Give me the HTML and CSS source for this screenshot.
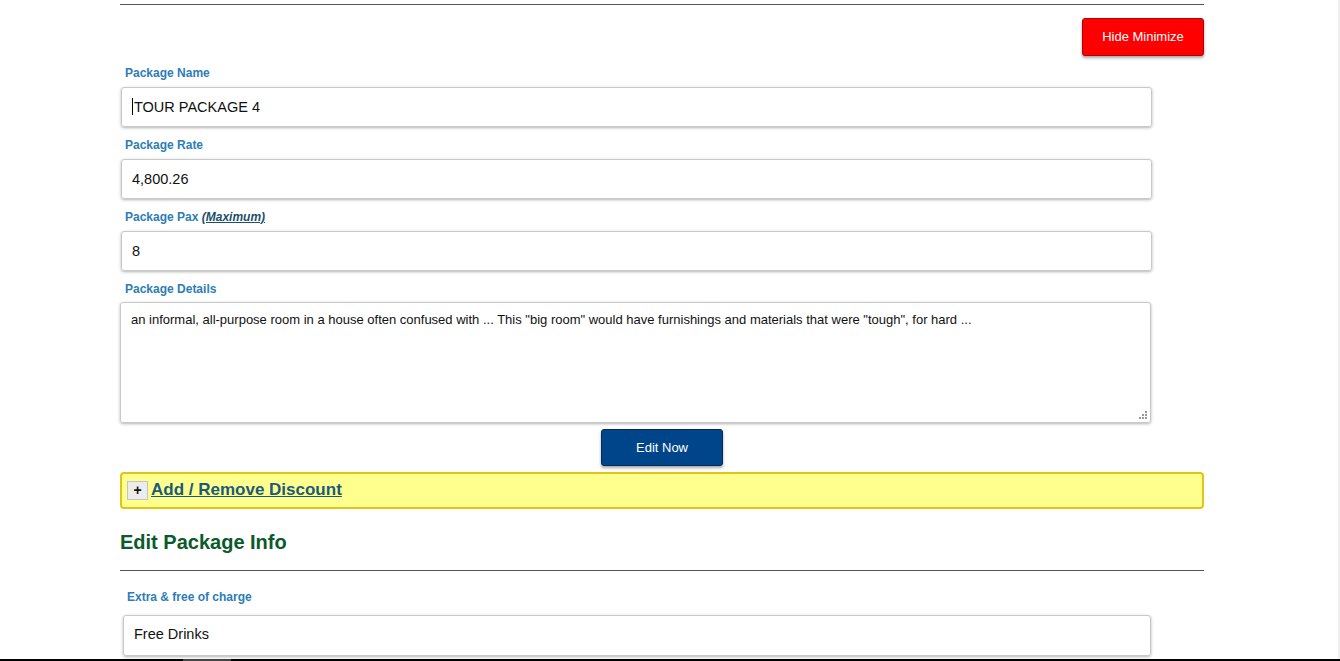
FILE: index.html
```html
<!DOCTYPE html>
<html>
<head>
<meta charset="utf-8">
<link rel="stylesheet" href="styles.css">
</head>
<body>
<div class="page">
  <hr class="rule top-rule">
  <div class="actions">
    <button class="btn-hide">Hide Minimize</button>
  </div>
  <div class="field">
    <label class="lbl">Package Name</label>
    <div class="input"><span class="caret"></span>TOUR PACKAGE 4</div>
  </div>
  <div class="field">
    <label class="lbl">Package Rate</label>
    <div class="input">4,800.26</div>
  </div>
  <div class="field">
    <label class="lbl">Package Pax <a class="sub">(Maximum)</a></label>
    <div class="input">8</div>
  </div>
  <div class="field details">
    <label class="lbl">Package Details</label>
    <div class="textarea">an informal, all-purpose room in a house often confused with ... This "big room" would have furnishings and materials that were "tough", for hard ...
      <svg class="grip" width="8" height="8" viewBox="0 0 8 8"><g fill="#9a9a9a"><rect x="6" y="0" width="2" height="2"/><rect x="3" y="3" width="2" height="2"/><rect x="6" y="3" width="2" height="2"/><rect x="0" y="6" width="2" height="2"/><rect x="3" y="6" width="2" height="2"/><rect x="6" y="6" width="2" height="2"/></g></svg>
    </div>
  </div>
  <div class="submit-row">
    <button class="btn-edit">Edit Now</button>
  </div>
  <div class="discount">
    <span class="plus">+</span>
    <a class="discount-link">Add / Remove Discount</a>
  </div>
  <h2 class="section-title">Edit Package Info</h2>
  <hr class="rule section-rule">
  <div class="field extra">
    <label class="lbl">Extra &amp; free of charge</label>
    <div class="input">Free Drinks</div>
  </div>
</div>
<div class="edge-right"></div>
<div class="edge-bottom"><span class="edge-thumb"></span></div>
</body>
</html>
```

FILE: styles.css
```css
html, body {
  margin: 0;
  padding: 0;
  background: #fff;
  font-family: "Liberation Sans", Arial, sans-serif;
  overflow: hidden;
}
.page {
  margin-left: 120px;
  width: 1084px;
}
.rule {
  border: 0;
  height: 1px;
  margin: 0;
  background: #555;
}
.top-rule {
  margin-top: 4px;
}
.actions {
  display: flex;
  justify-content: flex-end;
  margin-top: 13px;
}
.btn-hide {
  width: 122px;
  height: 38px;
  background: #ff0000;
  border: 1px solid #b30000;
  border-radius: 3px;
  color: #fff;
  font-family: "Liberation Sans", Arial, sans-serif;
  font-size: 13px;
  line-height: 35px;
  padding: 0 0 1px 0;
  box-shadow: 0 2px 3px rgba(0,0,0,0.35);
}
.field {
  display: flex;
  flex-direction: column;
  margin-bottom: 9px;
}
.actions + .field {
  margin-top: 8px;
}
.lbl {
  display: block;
  font-size: 12px;
  line-height: 16px;
  font-weight: bold;
  color: #2d7db6;
  margin-left: 5px;
  padding-top: 1px;
  margin-bottom: 6px;
}
.sub {
  color: #1d4f6b;
  font-style: italic;
  text-decoration: underline;
  font-size: 12px;
}
.input {
  box-sizing: border-box;
  margin-left: 1px;
  width: 1031px;
  height: 40px;
  border: 1px solid #c8c8c8;
  border-radius: 3px;
  box-shadow: 0 1px 3px rgba(0,0,0,0.3);
  padding: 0 10px 1px 10px;
  font-size: 14.5px;
  line-height: 38px;
  color: #111;
  display: flex;
  align-items: center;
}
.caret {
  display: inline-block;
  width: 1px;
  height: 17px;
  background: #000;
  margin-right: 1px;
}
.details .lbl {
  margin-bottom: 5px;
}
.details {
  margin-bottom: 6px;
}
.textarea {
  position: relative;
  box-sizing: border-box;
  width: 1031px;
  height: 121px;
  border: 1px solid #c8c8c8;
  border-radius: 3px;
  box-shadow: 0 1px 3px rgba(0,0,0,0.3);
  padding: 8px 10px;
  font-size: 13px;
  line-height: 18px;
  color: #111;
}
.grip {
  position: absolute;
  right: 3px;
  bottom: 3px;
}
.submit-row {
  width: 1084px;
  display: flex;
  justify-content: center;
  margin-bottom: 6px;
}
.btn-edit {
  width: 122px;
  height: 37px;
  background: #00448a;
  border: 1px solid #002c5c;
  border-radius: 3px;
  color: #fff;
  font-family: "Liberation Sans", Arial, sans-serif;
  font-size: 13px;
  padding: 0;
  box-shadow: 0 2px 3px rgba(0,0,0,0.35);
}
.discount {
  box-sizing: border-box;
  height: 37px;
  background: #ffff8e;
  border: 2px solid #e3c21a;
  border-radius: 4px;
  display: flex;
  align-items: center;
  padding-left: 5px;
  padding-bottom: 1px;
  gap: 3px;
}
.plus {
  box-sizing: border-box;
  width: 21px;
  height: 19px;
  background: #ececec;
  border: 1px solid #c4c4c4;
  font-size: 14px;
  font-weight: bold;
  line-height: 17px;
  text-align: center;
  color: #111;
  margin-top: 1px;
}
.discount-link {
  font-size: 17px;
  font-weight: bold;
  color: #1a5a7c;
  text-decoration: underline;
  line-height: 20px;
}
.section-title {
  margin: 21px 0 0 0;
  font-size: 20px;
  line-height: 24px;
  color: #0b5a2c;
  font-weight: bold;
}
.section-rule {
  margin-top: 16px;
}
.extra {
  margin-top: 17px;
}
.extra .lbl {
  margin-left: 7px;
  margin-bottom: 10px;
}
.extra .input {
  margin-left: 3px;
  width: 1028px;
  height: 41px;
  padding-bottom: 3px;
}
.edge-right {
  position: fixed;
  top: 0;
  right: 0;
  width: 2px;
  height: 100%;
  background: #efefef;
}
.edge-bottom {
  position: fixed;
  left: 0;
  bottom: 0;
  width: 100%;
  height: 2px;
  background: #000;
}
.edge-thumb {
  position: absolute;
  left: 183px;
  top: 0;
  width: 48px;
  height: 2px;
  background: #444;
}
```
